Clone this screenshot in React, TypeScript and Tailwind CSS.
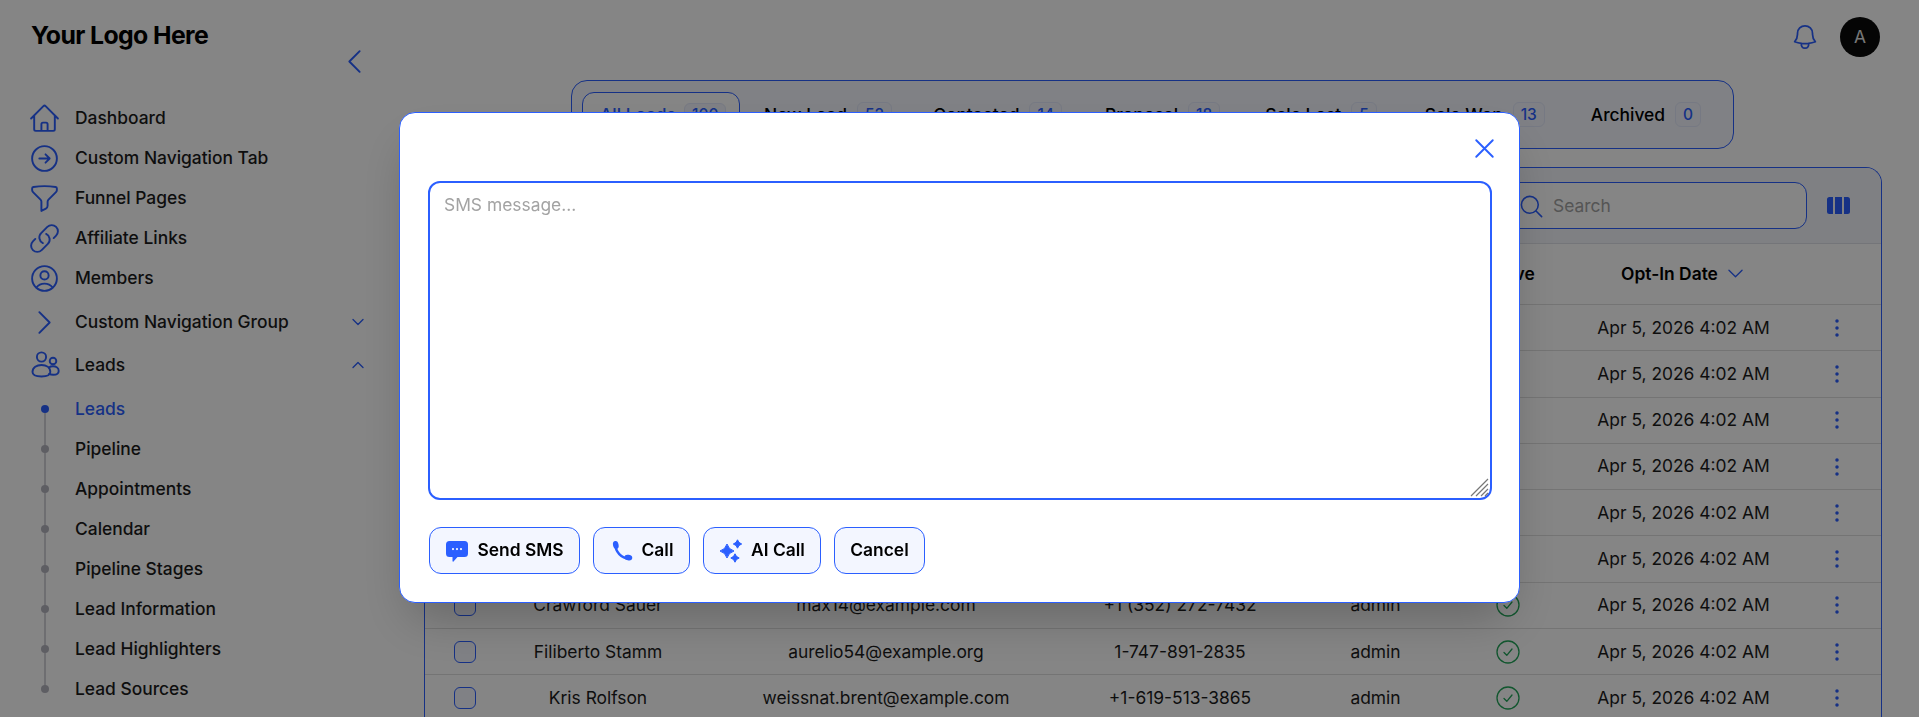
import React from "react";
import {
  HiOutlineArrowRightCircle,
  HiOutlineBell,
  HiOutlineChevronDown,
  HiOutlineChevronLeft,
  HiOutlineChevronRight,
  HiOutlineChevronUp,
  HiOutlineEllipsisVertical,
  HiOutlineFunnel,
  HiOutlineHome,
  HiOutlineLink,
  HiOutlineMagnifyingGlass,
  HiOutlineUserCircle,
  HiOutlineXMark,
} from "react-icons/hi2";

const font = { fontFamily: "Inter, sans-serif" };
const thin = { strokeWidth: 1.4 };
const bold = { strokeWidth: 2 };

function UsersIcon() {
  return (
    <svg viewBox="0 0 33 33" className="h-[33px] w-[33px]" fill="none" stroke="currentColor" strokeWidth="1.9" strokeLinecap="round" strokeLinejoin="round">
      <circle cx="13.5" cy="8" r="4.6" />
      <circle cx="25" cy="12" r="3.300" />
      <path d="M4.500 23c0-4.500 4.200-7 9-7s8.800 2.500 8.800 7c0 3-3.800 4.500-8.800 4.500S4.500 26 4.500 23Z" />
      <path d="M21 18.500c1-.8 2.500-1.200 4-1.200 3.100 0 5.700 1.800 5.700 4.700 0 2.600-2.500 3.800-5.500 3.800-1.500 0-3-.3-4.200-.9" />
    </svg>
  );
}

function ColumnsIcon() {
  return (
    <svg viewBox="0 0 23 17" className="h-[17px] w-[23px]" fill="currentColor">
      <path d="M0 2.500A2.500 2.500 0 0 1 2.500 0H6v17H2.500A2.500 2.500 0 0 1 0 14.500v-12Z" />
      <rect x="8" width="7" height="17" />
      <path d="M17 0h3.500A2.500 2.500 0 0 1 23 2.500v12a2.500 2.500 0 0 1-2.500 2.500H17V0Z" />
    </svg>
  );
}

function SmsIcon() {
  return (
    <svg viewBox="0 0 24 24" className="h-6 w-6" fill="currentColor">
      <path fillRule="evenodd" d="M4.500 2h15A3.500 3.500 0 0 1 23 5.500v9a3.500 3.500 0 0 1-3.500 3.500h-7l-4 4.500c-.4.400-1 .100-1-.4V18h-3A3.500 3.500 0 0 1 1 14.500v-9A3.500 3.500 0 0 1 4.500 2ZM8 9a1.100 1.100 0 1 0 0 2.200A1.100 1.100 0 0 0 8 9Zm4 0a1.100 1.100 0 1 0 0 2.200A1.100 1.100 0 0 0 12 9Zm4 0a1.100 1.100 0 1 0 0 2.200A1.100 1.100 0 0 0 16 9Z" />
    </svg>
  );
}

function PhoneIcon() {
  return (
    <svg viewBox="0 0 24 24" className="h-6 w-6" fill="currentColor">
      <path d="M5.500 5C5 12.500 11.500 19.500 19 19.500" fill="none" stroke="currentColor" strokeWidth="2.400" strokeLinecap="round" />
      <ellipse cx="5.800" cy="6" rx="2.800" ry="4" transform="rotate(-12 5.800 6)" />
      <ellipse cx="18.300" cy="18.600" rx="4" ry="2.800" transform="rotate(12 18.300 18.600)" />
    </svg>
  );
}

// four-pointed star with concave sides
function star(cx: number, cy: number, r: number) {
  const k = r * 0.22;
  return `M${cx} ${cy - r}Q${cx + k} ${cy - k} ${cx + r} ${cy}Q${cx + k} ${cy + k} ${cx} ${cy + r}Q${cx - k} ${cy + k} ${cx - r} ${cy}Q${cx - k} ${cy - k} ${cx} ${cy - r}Z`;
}

function SparkleIcon() {
  return (
    <svg viewBox="0 0 24 24" className="h-6 w-6" fill="currentColor" stroke="currentColor" strokeWidth="1" strokeLinejoin="round">
      <path d={star(8, 12, 7)} />
      <path d={star(18.500, 5, 4.200)} />
      <path d={star(16, 19, 4.200)} />
    </svg>
  );
}

function CheckCircle() {
  return (
    <svg viewBox="0 0 24 24" className="h-6 w-6 text-[#22a559]" fill="none" stroke="currentColor" strokeWidth="1.300" strokeLinecap="round" strokeLinejoin="round">
      <circle cx="12" cy="12" r="11" />
      <path d="m8 12.500 2.800 2.800L16 9" />
    </svg>
  );
}

const navIcon = "h-[33px] w-[33px]";

const topNav = [
  { label: "Dashboard", icon: <HiOutlineHome className={navIcon} style={thin} /> },
  { label: "Custom Navigation Tab", icon: <HiOutlineArrowRightCircle className={navIcon} style={thin} /> },
  { label: "Funnel Pages", icon: <HiOutlineFunnel className={navIcon} style={thin} /> },
  { label: "Affiliate Links", icon: <HiOutlineLink className={navIcon} style={thin} /> },
  { label: "Members", icon: <HiOutlineUserCircle className={navIcon} style={thin} /> },
];

const leadLinks = ["Leads", "Pipeline", "Appointments", "Calendar", "Pipeline Stages", "Lead Information", "Lead Highlighters", "Lead Sources"];

const tabs = [
  { label: "New Lead", count: 52, gap: "mr-[41px]" },
  { label: "Contacted", count: 14, gap: "mr-[43px]" },
  { label: "Proposal", count: 18, gap: "mr-[45px]" },
  { label: "Sale Lost", count: 5, gap: "mr-[48px]" },
  { label: "Sale Won", count: 13, gap: "mr-[46px]" },
  { label: "Archived", count: 0, gap: "" },
];

// the modal covers the first six rows, only their dates and menus show
const rows = [
  ["", "", ""],
  ["", "", ""],
  ["", "", ""],
  ["", "", ""],
  ["", "", ""],
  ["", "", ""],
  ["Crawford Sauer", "max14@example.com", "+1 (352) 272-7432"],
  ["Filiberto Stamm", "aurelio54@example.org", "1-747-891-2835"],
  ["Kris Rolfson", "weissnat.brent@example.com", "+1-619-513-3865"],
];

const tableCols = "grid grid-cols-[80px_186px_390px_198px_193px_72px_279px_28px] items-center text-center";

function Sidebar() {
  return (
    <aside className="flex w-[400px] shrink-0 flex-col pl-[28px]">
      <div className="pt-[20px] pl-[3px] text-[24.8px] leading-[30px] font-bold tracking-[-0.6px] text-black">Your Logo Here</div>
      <div className="-mt-[5px] flex justify-end pr-[29px] text-[#2b5fff]">
        <HiOutlineChevronLeft className={navIcon} style={thin} />
      </div>
      <nav className="mt-[20px] flex flex-col pr-[34px] text-[17.4px] font-medium text-[#1c1c1c]">
        {topNav.map((item) => (
          <div key={item.label} className="flex h-10 items-center gap-[14px] text-[#2b5fff]">
            {item.icon}
            <span className="text-[#1c1c1c]">{item.label}</span>
          </div>
        ))}
        <div className="mt-[4px] flex h-10 items-center gap-[14px] text-[#2b5fff]">
          <HiOutlineChevronRight className={navIcon} style={thin} />
          <span className="flex-1 text-[#1c1c1c]">Custom Navigation Group</span>
          <HiOutlineChevronDown className="h-4 w-4" style={bold} />
        </div>
        <div className="mt-[3px] flex h-10 items-center gap-[14px] text-[#2b5fff]">
          <UsersIcon />
          <span className="flex-1 text-[#1c1c1c]">Leads</span>
          <HiOutlineChevronUp className="h-4 w-4" style={bold} />
        </div>
        <div className="relative mt-[4px] flex flex-col">
          <div className="absolute top-[20px] bottom-[20px] left-[16px] w-[2px] bg-[#d4d4d8]" />
          {leadLinks.map((link, i) => (
            <div key={link} className="relative flex h-10 items-center pl-[13px]">
              <span className={`h-2 w-2 rounded-full ${i === 0 ? "bg-[#2b5fff]" : "bg-[#b5b5be]"}`} />
              <span className={i === 0 ? "ml-[26px] text-[#2b5fff]" : "ml-[26px]"}>{link}</span>
            </div>
          ))}
        </div>
      </nav>
    </aside>
  );
}

function Badge({ n }: { n: number }) {
  return (
    <span className="flex h-[25px] min-w-6 items-center justify-center rounded-md border border-[#e3e8fb] bg-[#f3f6ff] px-[7px] text-[15.5px] font-medium text-[#2b5fff]">
      {n}
    </span>
  );
}

function Main() {
  return (
    <main className="flex min-w-0 flex-1 flex-col">
      <header className="flex h-[80px] items-start justify-end gap-[20px] pt-[17px] pr-[39px]">
        <HiOutlineBell className="mt-[5px] h-[30px] w-[30px] text-[#2b5fff]" style={thin} />
        <div className="flex h-10 w-10 items-center justify-center rounded-full bg-[#0a0a0a] text-[17.4px] text-[#e5e5e5]">A</div>
      </header>

      <div className="ml-[171px] flex h-[69px] w-[1163px] items-center rounded-2xl border border-[#2b5fff] bg-[#f5f7ff] pt-[1px] pl-[10px]">
        <div className="flex h-[46px] w-[158px] items-center gap-[8px] rounded-xl border border-[#2b5fff] bg-white pl-[17px] text-[17.4px] font-medium text-[#2b5fff]">
          All Leads
          <Badge n={100} />
        </div>
        <div className="flex flex-1 items-center pl-[24px] text-[17.4px] font-medium text-black">
          {tabs.map((tab) => (
            <div key={tab.label} className={`flex items-center gap-[10px] ${tab.gap}`}>
              {tab.label}
              <Badge n={tab.count} />
            </div>
          ))}
        </div>
      </div>

      <section className="mt-[18px] ml-[24px] w-[1458px] flex-1 overflow-hidden rounded-t-2xl border border-b-0 border-[#2b5fff]">
        <div className="flex h-[76px] items-start justify-end border-b border-[#dfe1e8] bg-[#f3f5fb] pt-[14px] pr-[31px]">
          <div className="flex h-[47px] w-[300px] items-center gap-[8px] rounded-xl border border-[#2b5fff] bg-white pt-[1px] pl-[10px] text-[17.4px] text-[#a3a3a3]">
            <HiOutlineMagnifyingGlass className="h-[27px] w-[27px] text-[#2b5fff]" style={thin} />
            Search
          </div>
          <div className="ml-[20px] pt-[15px] text-[#2b5fff]">
            <ColumnsIcon />
          </div>
        </div>
        <div className={`${tableCols} h-[61px] border-b border-[#dfdfdf] bg-white text-[17.4px] font-semibold text-black`}>
          <span />
          <span>Name</span>
          <span>Email</span>
          <span>Phone</span>
          <span>Role</span>
          <span>Active</span>
          <span className="flex items-center justify-center gap-[7px]">
            Opt-In Date
            <HiOutlineChevronDown className="h-[21px] w-[21px] text-[#2b5fff]" />
          </span>
          <span />
        </div>
        {rows.map((row, i) => (
          <div key={i} className={`${tableCols} h-[46.300px] border-b border-[#dfdfdf] bg-white text-[17.4px] text-[#1c1c1c]`}>
            <span className="flex justify-center">
              <span className="h-[22px] w-[22px] rounded-md border border-[#2b5fff] bg-[#f5f7ff]" />
            </span>
            <span>{row[0]}</span>
            <span>{row[1]}</span>
            <span>{row[2]}</span>
            <span>admin</span>
            <span className="flex justify-center">
              <CheckCircle />
            </span>
            <span>Apr 5, 2026 4:02 AM</span>
            <span className="flex justify-center text-[#2b5fff]">
              <HiOutlineEllipsisVertical className="h-7 w-7" style={{ strokeWidth: 1.5 }} />
            </span>
          </div>
        ))}
      </section>
    </main>
  );
}

function SmsDialog() {
  const button = "flex h-[47px] items-center justify-center gap-[8px] rounded-xl border border-[#2b5fff] bg-[#f3f6ff] text-[17.4px] font-semibold whitespace-nowrap text-black";
  return (
    <div className="fixed inset-0 flex items-center justify-center bg-black/48 pb-[2px]">
      <div className="flex h-[491px] w-[1121px] flex-col rounded-2xl border border-[#2b5fff] bg-white pr-[27px] pl-[28px] shadow-2xl">
        <div className="flex h-[68px] justify-end pt-[19px] text-[#2b5fff]">
          <HiOutlineXMark className="-mr-[9px] h-[33px] w-[33px]" style={thin} />
        </div>
        <div className="relative flex">
          <textarea
            className="h-[319px] w-full resize-none rounded-xl border-2 border-[#2b5fff] px-[14px] py-[10px] text-[17.4px] leading-6 outline-none placeholder:text-[#a3a3a3]"
            placeholder="SMS message..."
          />
          <svg viewBox="0 0 19 19" className="absolute right-[3px] bottom-[3px] h-[19px] w-[19px]" fill="none" stroke="#777777" strokeWidth="1.2">
            <path d="M1 18 18 1M6 18 18 6M11 18l7-7M15 18l3-3" />
          </svg>
        </div>
        <div className="mt-[27px] ml-[1px] flex gap-[13px]">
          <button className={`${button} w-[151px]`}>
            <span className="text-[#2b5fff]"><SmsIcon /></span>
            Send SMS
          </button>
          <button className={`${button} w-[97px]`}>
            <span className="text-[#2b5fff]"><PhoneIcon /></span>
            Call
          </button>
          <button className={`${button} w-[118px]`}>
            <span className="text-[#2b5fff]"><SparkleIcon /></span>
            AI Call
          </button>
          <button className={`${button} w-[91px]`}>Cancel</button>
        </div>
      </div>
    </div>
  );
}

export default function App() {
  return (
    <div className="flex h-[717px] overflow-hidden bg-white" style={font}>
      <Sidebar />
      <Main />
      <SmsDialog />
    </div>
  );
}
